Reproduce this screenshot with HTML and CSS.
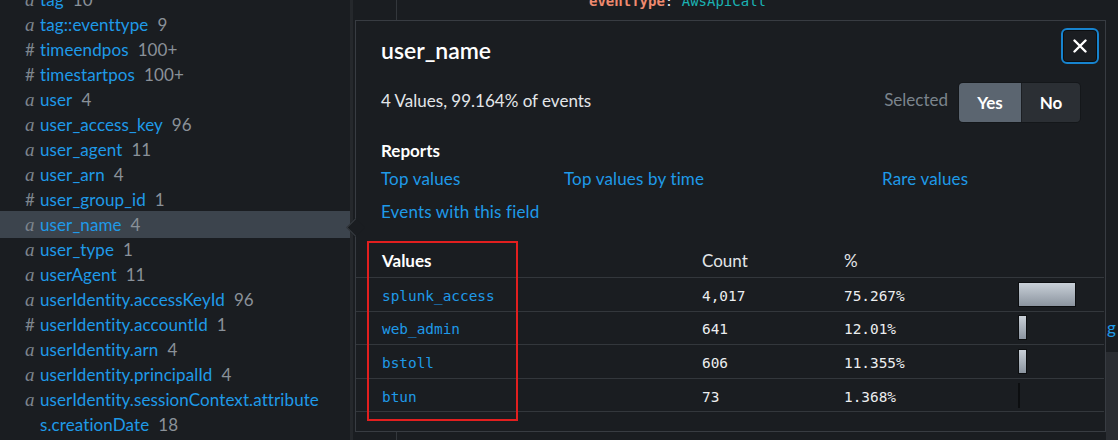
FILE: index.html
```html
<!DOCTYPE html>
<html lang="en">
<head>
<meta charset="utf-8">
<title>Fields - user_name</title>
<link rel="stylesheet" href="styles.css">
</head>
<body>
<div class="app">
  <aside class="sidebar">
    <ul class="field-list">
      <li class="field"><span class="ftype str">a</span><span class="fname">tag<span class="fcount">10</span></span></li>
      <li class="field"><span class="ftype str">a</span><span class="fname">tag::eventtype<span class="fcount">9</span></span></li>
      <li class="field"><span class="ftype num">#</span><span class="fname">timeendpos<span class="fcount">100+</span></span></li>
      <li class="field"><span class="ftype num">#</span><span class="fname">timestartpos<span class="fcount">100+</span></span></li>
      <li class="field"><span class="ftype str">a</span><span class="fname">user<span class="fcount">4</span></span></li>
      <li class="field"><span class="ftype str">a</span><span class="fname">user_access_key<span class="fcount">96</span></span></li>
      <li class="field"><span class="ftype str">a</span><span class="fname">user_agent<span class="fcount">11</span></span></li>
      <li class="field"><span class="ftype str">a</span><span class="fname">user_arn<span class="fcount">4</span></span></li>
      <li class="field"><span class="ftype num">#</span><span class="fname">user_group_id<span class="fcount">1</span></span></li>
      <li class="field is-selected"><span class="ftype str">a</span><span class="fname">user_name<span class="fcount">4</span></span></li>
      <li class="field"><span class="ftype str">a</span><span class="fname">user_type<span class="fcount">1</span></span></li>
      <li class="field"><span class="ftype str">a</span><span class="fname">userAgent<span class="fcount">11</span></span></li>
      <li class="field"><span class="ftype str">a</span><span class="fname">userIdentity.accessKeyId<span class="fcount">96</span></span></li>
      <li class="field"><span class="ftype num">#</span><span class="fname">userIdentity.accountId<span class="fcount">1</span></span></li>
      <li class="field"><span class="ftype str">a</span><span class="fname">userIdentity.arn<span class="fcount">4</span></span></li>
      <li class="field"><span class="ftype str">a</span><span class="fname">userIdentity.principalId<span class="fcount">4</span></span></li>
      <li class="field"><span class="ftype str">a</span><span class="fname wrap">userIdentity.sessionContext.attributes.creationDate<span class="fcount">18</span></span></li>
    </ul>
  </aside>

  <main class="events">
    <div class="gutter"></div>
    <div class="event">
      <div class="code-line"><span class="k">eventType</span><span class="p">: </span><span class="v">AwsApiCall</span></div>
      <div class="event-spacer"></div>
      <div class="event-actions"><a class="link" href="#">Show syntax highlighting</a></div>
      <div class="event-lower"><div class="next-strip"></div></div>
    </div>
  </main>
</div>

<section class="popover" role="dialog" aria-label="user_name">
  <header class="pop-head">
    <h2 class="pop-title">user_name</h2>
    <button class="close" aria-label="Close">
      <svg width="14" height="14" viewBox="0 0 14 14" aria-hidden="true"><path d="M1.5 1.5 L12.5 12.5 M12.5 1.5 L1.5 12.5" stroke="#ffffff" stroke-width="2.4" stroke-linecap="round" fill="none"/></svg>
    </button>
  </header>

  <div class="pop-summary">
    <span class="summary-text">4 Values, 99.164% of events</span>
    <div class="selected">
      <span class="sel-label">Selected</span>
      <div class="seg">
        <button class="seg-btn is-on">Yes</button>
        <button class="seg-btn">No</button>
      </div>
    </div>
  </div>

  <div class="reports">
    <h3 class="reports-title">Reports</h3>
    <div class="report-links">
      <a class="link" href="#">Top values</a>
      <a class="link" href="#">Top values by time</a>
      <a class="link" href="#">Rare values</a>
      <a class="link" href="#">Events with this field</a>
    </div>
  </div>

  <div class="vtable">
    <div class="vrow vhead">
      <div class="vcell vh-values">Values</div>
      <div class="vcell">Count</div>
      <div class="vcell">%</div>
      <div class="vcell"></div>
    </div>
    <div class="vrow">
      <div class="vcell mono val">splunk_access</div>
      <div class="vcell mono">4,017</div>
      <div class="vcell mono">75.267%</div>
      <div class="vcell bar-cell"><div class="bar" style="width:58px"></div></div>
    </div>
    <div class="vrow">
      <div class="vcell mono val">web_admin</div>
      <div class="vcell mono">641</div>
      <div class="vcell mono">12.01%</div>
      <div class="vcell bar-cell"><div class="bar" style="width:9.2px"></div></div>
    </div>
    <div class="vrow">
      <div class="vcell mono val">bstoll</div>
      <div class="vcell mono">606</div>
      <div class="vcell mono">11.355%</div>
      <div class="vcell bar-cell"><div class="bar" style="width:8.7px"></div></div>
    </div>
    <div class="vrow">
      <div class="vcell mono val">btun</div>
      <div class="vcell mono">73</div>
      <div class="vcell mono">1.368%</div>
      <div class="vcell bar-cell"><div class="bar" style="width:1.5px"></div></div>
    </div>
  </div>
</section>

<div class="annotation" aria-hidden="true"></div>
</body>
</html>
```

FILE: styles.css
```css
* { box-sizing: border-box; }

html, body {
  margin: 0;
  padding: 0;
  width: 1118px;
  height: 440px;
  overflow: hidden;
  background: #1a1d21;
  color: #e3e6e9;
  font-family: Lato, "Open Sans", sans-serif;
  font-size: 17px;
}

.app {
  display: flex;
  height: 440px;
  overflow: hidden;
}

/* ---------- sidebar ---------- */
.sidebar {
  position: relative;
  flex: none;
  width: 353px;
  border-right: 3px solid #25282c;
  overflow: hidden;
}
.sidebar::after {
  content: "";
  position: absolute;
  right: -3px;
  top: 0;
  width: 3px;
  height: 353px;
  background: #3b4046;
}

.field-list {
  list-style: none;
  margin: -13px 0 0 0;
  padding: 0;
}

.field {
  display: grid;
  grid-template-columns: 15px minmax(0, 1fr);
  align-items: start;
  padding: 0 26px 0 25px;
  line-height: 25px;
}
.field.is-selected {
  background: #3c444d;
  margin: -1px 0;
  padding-top: 1px;
  padding-bottom: 1px;
}

.ftype {
  color: #7d858e;
}
.ftype.str {
  font-family: "Liberation Serif", "DejaVu Serif", serif;
  font-style: italic;
  font-size: 19px;
}
.ftype.num {
  font-size: 17px;
}

.fname {
  display: block;
  color: #1f9ae8;
  letter-spacing: 0.1px;
}
.fname.wrap {
  word-break: break-all;
}
.fcount {
  color: #8a9199;
  margin-left: 9px;
}

/* ---------- events area ---------- */
.events {
  flex: 1;
  display: flex;
  min-width: 0;
}
.gutter {
  flex: none;
  width: 44px;
  border-right: 1px solid #33373c;
}
.event {
  flex: 1;
  display: flex;
  flex-direction: column;
  min-width: 0;
}
.code-line {
  margin-top: -9px;
  padding-left: 192px;
  font-family: "DejaVu Sans Mono", "Liberation Mono", monospace;
  font-size: 14px;
  line-height: 20px;
  white-space: nowrap;
}
.code-line .k { color: #ef8a6f; font-weight: bold; }
.code-line .p { color: #e3e6e9; }
.code-line .v { color: #1bb2b3; }

.event-spacer { height: 306px; }
.event-actions {
  display: flex;
  justify-content: flex-end;
  padding-right: 2px;
  line-height: 22px;
}
.event-lower {
  flex: 1;
  display: flex;
  justify-content: flex-end;
  margin-top: 13px;
}
.next-strip {
  width: 12px;
  background: #2a2d32;
}

.link {
  color: #1f9ae8;
  text-decoration: none;
  letter-spacing: 0.15px;
}

/* ---------- popover ---------- */
.popover {
  position: absolute;
  left: 355px;
  top: 20px;
  width: 751px;
  background: #1a1d21;
  border: 1px solid #383c42;
  padding-bottom: 19px;
}
.popover::before {
  content: "";
  position: absolute;
  left: -7px;
  top: 200px;
  width: 12px;
  height: 12px;
  background: #1a1d21;
  border-left: 1px solid #383c42;
  border-bottom: 1px solid #383c42;
  transform: rotate(45deg);
}

.pop-head {
  display: flex;
  justify-content: space-between;
  align-items: flex-start;
  padding: 0 6px 0 25px;
}
.pop-title {
  margin: 15px 0 0 0;
  font-size: 23px;
  line-height: 28px;
  font-weight: 600;
  color: #ffffff;
}
.close {
  margin-top: 7px;
  width: 38px;
  height: 36px;
  display: flex;
  align-items: center;
  justify-content: center;
  background: #1a1d21;
  border: 2px solid #1784cf;
  border-radius: 6px;
  box-shadow: inset 0 0 0 1px #0c0e10;
  padding: 0;
}

.pop-summary {
  display: flex;
  justify-content: space-between;
  align-items: center;
  margin-top: 19px;
  padding: 0 25px 0 25px;
}
.summary-text {
  color: #e3e6e9;
  padding-bottom: 4px;
}
.selected {
  display: flex;
  align-items: center;
  gap: 11px;
}
.sel-label {
  color: #7b848d;
  padding-bottom: 6px;
}
.seg {
  display: flex;
  height: 39px;
  border-radius: 4px;
  overflow: hidden;
  box-shadow: 0 0 0 1px #14171a;
}
.seg-btn {
  border: 0;
  margin: 0;
  font-family: inherit;
  font-size: 17px;
  font-weight: 700;
  color: #ffffff;
  background: #2b2f34;
  width: 58px;
  padding: 0;
}
.seg-btn.is-on {
  width: 63px;
  background: #5b6570;
  border-right: 1px solid #1c1f23;
}

.reports {
  margin-top: 18px;
  padding: 0 25px;
}
.reports-title {
  margin: 0;
  font-size: 17px;
  line-height: 22px;
  font-weight: 700;
  color: #ffffff;
}
.report-links {
  display: grid;
  grid-template-columns: 183px 318px 1fr;
  row-gap: 11px;
  margin-top: 6px;
  line-height: 22px;
}

.vtable {
  margin-top: 21px;
}
.vrow {
  display: grid;
  grid-template-columns: 320px 142px 176px 1fr;
  align-items: center;
  height: 33.6px;
  border-bottom: 1px solid #33373c;
  margin-right: 1px;
}
.vrow.vhead {
  height: 34px;
  color: #e3e6e9;
}
.vcell {
  padding-left: 26px;
  white-space: nowrap;
}
.vcell.bar-cell {
  padding-left: 24px;
}
.vh-values {
  font-weight: 700;
  color: #ffffff;
}
.mono {
  font-family: "DejaVu Sans Mono", "Liberation Mono", monospace;
  font-size: 14.4px;
  color: #eceef0;
  padding-top: 3px;
}
.mono.val {
  color: #1f9ae8;
}
.bar {
  height: 25px;
  min-width: 1px;
  border: 1px solid #0c0e10;
  background: linear-gradient(#c9d0d8, #8b949f);
}

/* ---------- screenshot annotation ---------- */
.annotation {
  position: absolute;
  left: 367px;
  top: 241px;
  width: 151px;
  height: 180px;
  border: 2px solid #e21f1f;
  pointer-events: none;
}
```
